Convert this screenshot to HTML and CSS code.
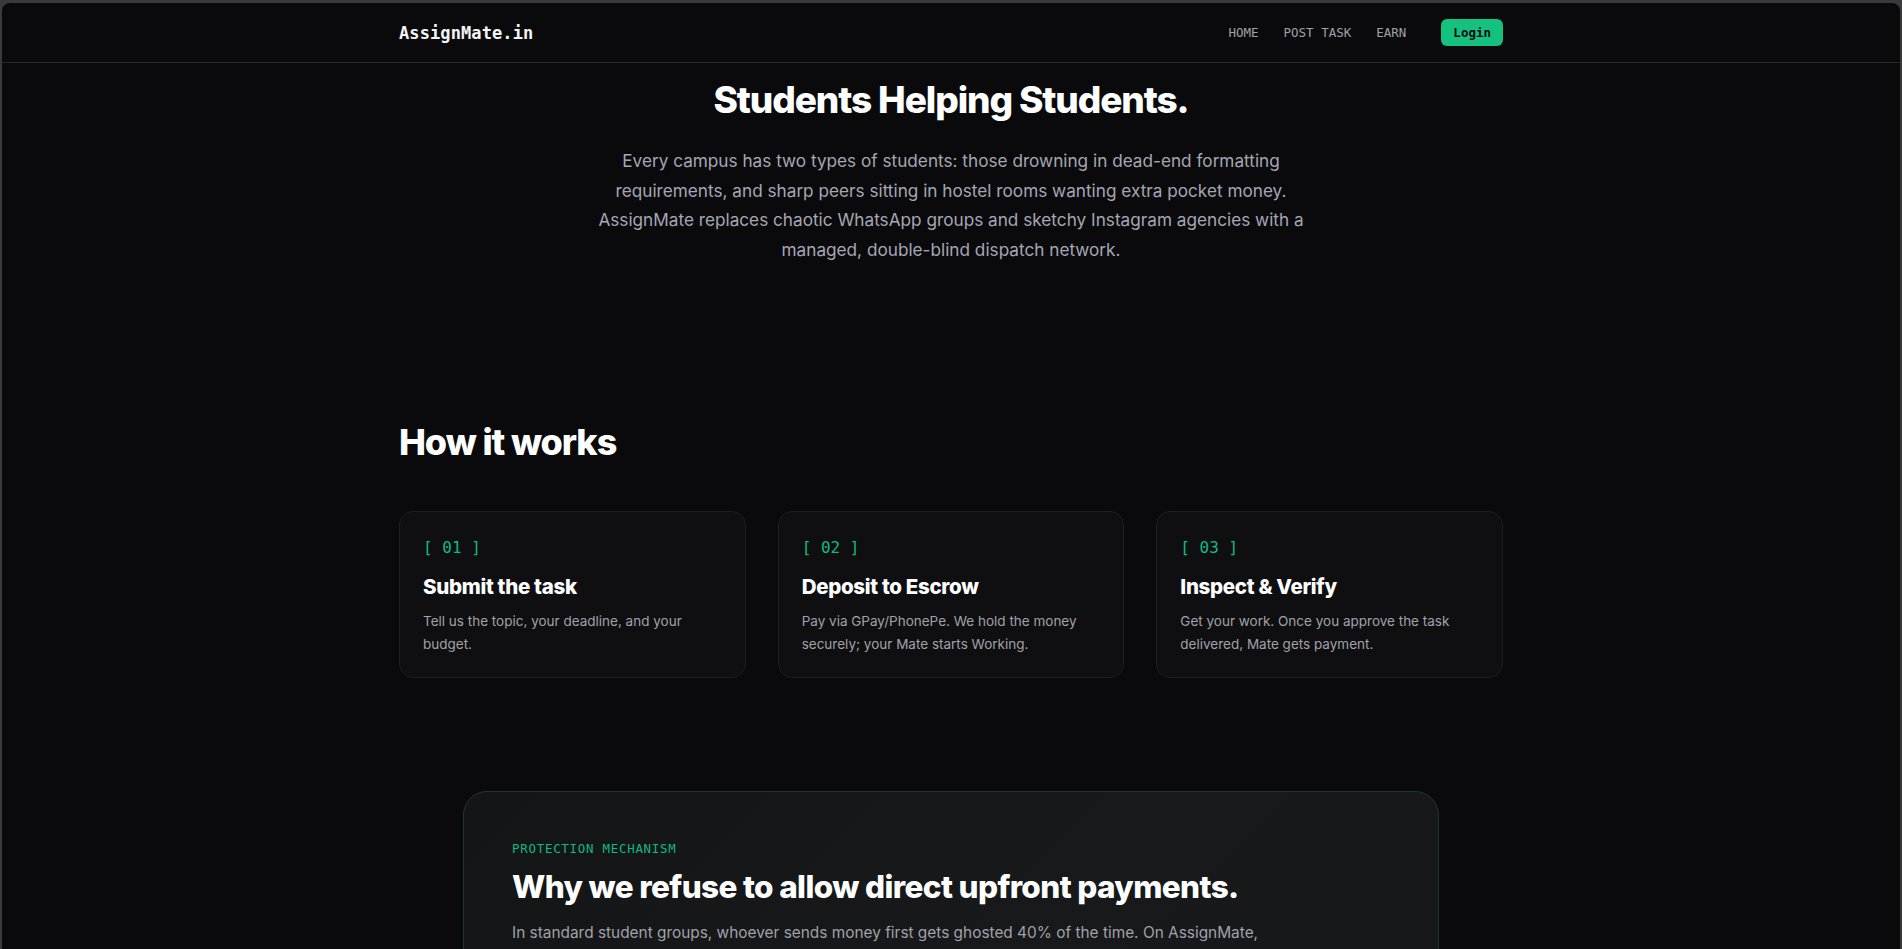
FILE: index.html
```html
<!DOCTYPE html>
<html lang="en">
<head>
<meta charset="utf-8">
<title>AssignMate.in</title>
<link rel="stylesheet" href="styles.css">
</head>
<body>
<div class="window">
  <header class="nav">
    <div class="container nav-inner">
      <a class="logo" href="#">AssignMate.in</a>
      <nav class="nav-links">
        <a href="#">HOME</a>
        <a href="#">POST TASK</a>
        <a href="#">EARN</a>
        <a class="btn-login" href="#">Login</a>
      </nav>
    </div>
  </header>

  <main>
    <section class="hero">
      <h1 class="hero-title">Students Helping Students.</h1>
      <p class="hero-text">Every campus has two types of students: those drowning in dead-end formatting requirements, and sharp peers sitting in hostel rooms wanting extra pocket money. AssignMate replaces chaotic WhatsApp groups and sketchy Instagram agencies with a managed, double-blind dispatch network.</p>
    </section>

    <section class="container how">
      <h2 class="section-title">How it works</h2>
      <div class="steps">
        <article class="step">
          <div class="step-num">[ 01 ]</div>
          <h3 class="step-title">Submit the task</h3>
          <p class="step-text">Tell us the topic, your deadline, and your budget.</p>
        </article>
        <article class="step">
          <div class="step-num">[ 02 ]</div>
          <h3 class="step-title">Deposit to Escrow</h3>
          <p class="step-text">Pay via GPay/PhonePe. We hold the money securely; your Mate starts Working.</p>
        </article>
        <article class="step">
          <div class="step-num">[ 03 ]</div>
          <h3 class="step-title">Inspect &amp; Verify</h3>
          <p class="step-text">Get your work. Once you approve the task delivered, Mate gets payment.</p>
        </article>
      </div>
    </section>

    <section class="protect">
      <div class="protect-label">PROTECTION MECHANISM</div>
      <h2 class="protect-title">Why we refuse to allow direct upfront payments.</h2>
      <p class="protect-text">In standard student groups, whoever sends money first gets ghosted 40% of the time. On AssignMate, your payment stays locked in escrow until you confirm the delivered work.</p>
    </section>
  </main>
</div>
</body>
</html>
```

FILE: styles.css
```css
* { box-sizing: border-box; }

html, body {
  margin: 0;
  padding: 0;
}

body {
  background: #3a3a3b;
  padding: 3px 2px 0 2px;
  font-family: "Inter", "Liberation Sans", sans-serif;
  color: #fff;
}

a { text-decoration: none; color: inherit; }

.window {
  background: #0a0a0c;
  border-radius: 8px 8px 0 0;
  min-height: 946px;
  overflow: hidden;
}

.container {
  width: 1104px;
  margin: 0 auto;
}

/* NAV */
.nav {
  height: 60px;
  border-bottom: 1px solid #27272a;
}

.nav-inner {
  height: 100%;
  display: flex;
  align-items: center;
  justify-content: space-between;
}

.logo {
  font-family: "DejaVu Sans Mono", "Liberation Mono", monospace;
  font-weight: 700;
  font-size: 17px;
  color: #f4f4f5;
  letter-spacing: 0.1px;
}

.nav-links {
  display: flex;
  align-items: center;
  gap: 25px;
  font-family: "DejaVu Sans Mono", "Liberation Mono", monospace;
  font-size: 12.5px;
  color: #a1a1aa;
}

.btn-login {
  margin-left: 10px;
  background: #14c17f;
  color: #0a0a0c;
  font-weight: 700;
  font-size: 12.5px;
  line-height: 15px;
  padding: 6px 12px 6px 12px;
  border-radius: 6px;
}

/* HERO */
.hero {
  text-align: center;
  padding-top: 15px;
}

.hero-title {
  margin: 0;
  font-size: 37px;
  line-height: 1.2;
  font-weight: 800;
  letter-spacing: -0.03em;
  color: #fff;
}

.hero-text {
  margin: 24px auto 0;
  max-width: 745px;
  font-size: 17.2px;
  line-height: 29.5px;
  color: #a6a6b4;
}

/* HOW IT WORKS */
.how {
  padding-top: 157px;
}

.section-title {
  margin: 0;
  font-size: 36px;
  line-height: 1.2;
  font-weight: 800;
  letter-spacing: -0.03em;
}

.steps {
  margin-top: 46px;
  display: grid;
  grid-template-columns: repeat(3, 1fr);
  gap: 32px;
}

.step {
  background: #0f0f11;
  border: 1px solid #1e1e22;
  border-radius: 14px;
  padding: 26px 23px 20px;
  height: 167px;
}

.step-num {
  font-family: "DejaVu Sans Mono", "Liberation Mono", monospace;
  font-size: 16px;
  line-height: 20px;
  color: #10b981;
}

.step-title {
  margin: 15px 0 0;
  font-size: 20.5px;
  line-height: 28px;
  font-weight: 800;
  letter-spacing: -0.015em;
  color: #fff;
}

.step-text {
  margin: 9px 0 0;
  font-size: 13.5px;
  line-height: 23px;
  color: #a1a1aa;
}

/* PROTECTION */
.protect {
  width: 976px;
  margin: 113px auto 0;
  border: 1px solid #1b3a2d;
  border-radius: 24px;
  background: linear-gradient(135deg, #131516 0%, #17191b 60%, #151718 100%);
  padding: 48px 48px 48px;
}

.protect-label {
  font-family: "DejaVu Sans Mono", "Liberation Mono", monospace;
  font-size: 12.5px;
  line-height: 18px;
  letter-spacing: 0.7px;
  color: #10b981;
}

.protect-title {
  margin: 10px 0 0;
  font-size: 31.5px;
  line-height: 1.2;
  font-weight: 800;
  letter-spacing: -0.02em;
  color: #fff;
}

.protect-text {
  margin: 14px 0 0;
  max-width: 760px;
  font-size: 15.4px;
  line-height: 28px;
  color: #a1a1aa;
}
```
